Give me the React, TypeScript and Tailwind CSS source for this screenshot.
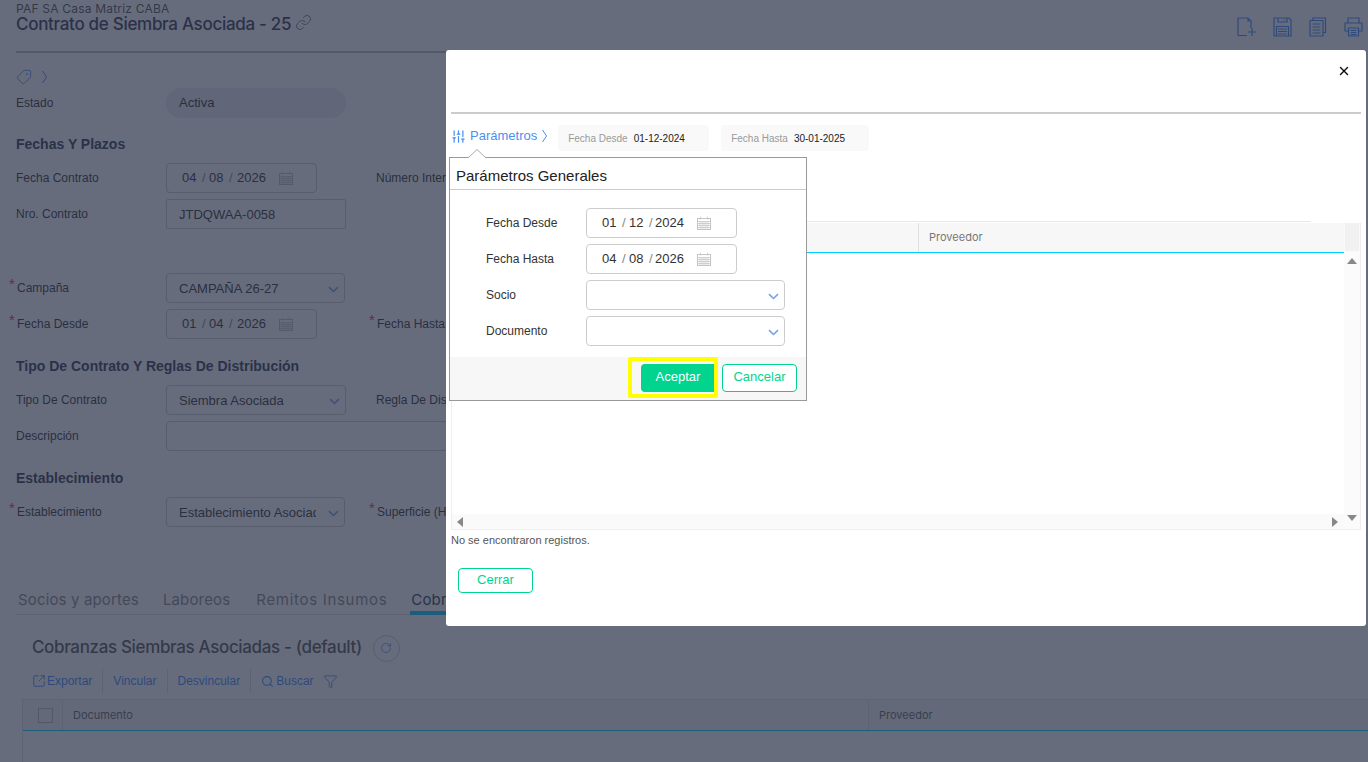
import React from 'react';
import { X, Link, Tag, SlidersVertical, Search, Filter, RotateCw, SquareArrowOutUpRight } from 'lucide-react';

const body = 'font-["Liberation_Sans",Arial,sans-serif]';
const display = 'font-["Inter",sans-serif]';

const CalendarIcon = () => (
  <svg width="14" height="14" viewBox="0 0 14 14" fill="none" stroke="#c4c4c4" strokeWidth="1" className="shrink-0">
    <rect x="0.5" y="2.5" width="13" height="11" />
    <path d="M3.500 0.500v3M10.500 0.500v3M1 5.500h12M1 7.500h12M1 9.500h12M1 11.500h12M3 5v8M5 5v8M7 5v8M9 5v8M11 5v8" strokeWidth="0.7" />
  </svg>
);

const Caret = () => (
  <svg width="11" height="7" viewBox="0 0 11 7" fill="none" stroke="#7ba0e6" strokeWidth="1.6" className="shrink-0 mt-[3px]">
    <path d="M1 1.200 L5.500 5.500 L10 1.200" />
  </svg>
);

// tall narrow chevron used next to the tag and the Parámetros link
const TallChevron = () => (
  <svg width="7" height="14" viewBox="0 0 7 14" fill="none" stroke="currentColor" strokeWidth="1" className="shrink-0">
    <path d="M1.500 1 L5.500 7 L1.500 13" />
  </svg>
);

const Req = () => <span className="text-[#ff2060] text-[15px] leading-none w-[8px] -ml-[7px] -mt-[9px]">*</span>;

const DateField = ({ d, m, y, tight }: { d: string; m: string; y: string; tight?: boolean }) => (
  <div className="h-[30px] w-[151px] border border-[#ccc] rounded-[4px] bg-white flex items-center pl-[15px] text-[13px] text-[#333]">
    <span className="w-[20px]">{d}</span>
    <span className="w-[7px] text-[#888]">/</span>
    <span className="w-[20px]">{m}</span>
    <span className={`${tight ? 'w-[6px]' : 'w-[8px]'} text-[#888]`}>/</span>
    <span className="w-[42px]">{y}</span>
    <CalendarIcon />
  </div>
);

const SelectBox = ({ value, w = 'w-[179px]' }: { value: string; w?: string }) => (
  <div className={`h-[30px] ${w} border border-[#ccc] rounded-[4px] bg-white flex items-center justify-between pl-[12px] pr-[5px] text-[13px] text-[#333]`}>
    <span className="w-[137px] overflow-hidden whitespace-nowrap pt-[2px]">{value}</span>
    <Caret />
  </div>
);

const Row = ({ label, req, second, secondReq, children, className = '' }: { label: string; req?: boolean; second?: string; secondReq?: boolean; children: React.ReactNode; className?: string }) => (
  <div className={`flex items-center h-[30px] ${className}`}>
    <div className="w-[150px] flex items-center text-[12px] text-[#333] shrink-0 -mt-px">
      {req && <Req />}
      <span>{label}</span>
    </div>
    <div className="w-[210px] shrink-0">{children}</div>
    {second && (
      <div className="flex items-center text-[12px] text-[#333] whitespace-nowrap -mt-px">
        {secondReq && <Req />}
        <span>{second}</span>
      </div>
    )}
  </div>
);

const Heading = ({ children, className = '' }: { children: React.ReactNode; className?: string }) => (
  <div className={`h-5 leading-5 text-[14px] font-bold text-[#333a55] ${className}`}>{children}</div>
);

const ToolbarIcons = () => (
  <div className="flex items-start gap-[17px] text-[#3d8bfd]">
    <svg width="19" height="20" viewBox="0 0 19 20" fill="none" stroke="currentColor" strokeWidth="1.2">
      <path d="M10 18.500H1V1h10l3 3v7" />
      <path d="M11 1v3h3M15 11v8M11 15h8" />
    </svg>
    <svg width="19" height="20" viewBox="0 0 19 20" fill="none" stroke="currentColor" strokeWidth="1.2">
      <path d="M1 1h15l2 2v16H1z" />
      <path d="M5 1v4h9V1M11 2.500v1M3.500 19V9.500h12V19M5 12h9M5 14.500h9M5 17h9" />
    </svg>
    <svg width="18" height="20" viewBox="0 0 18 20" fill="none" stroke="currentColor" strokeWidth="1.2">
      <path d="M4 3.500V1h12.500v14.500H14" />
      <path d="M1 3.500h13v15.500H1zM3.500 7h8M3.500 10h8M3.500 13h8M3.500 16h8" />
    </svg>
    <svg width="19" height="20" viewBox="0 0 19 20" fill="none" stroke="currentColor" strokeWidth="1.2">
      <path d="M4 6V1h11v5M4 14H1V6h17v8h-3" />
      <path d="M4.500 11h10v8h-10zM6.500 13.500h6M6.500 15.500h6M6.500 17.500h6" />
    </svg>
  </div>
);

const Background = () => (
  <div className={`${body} h-[762px] overflow-hidden bg-white`}>
    <div className="px-4">
      <div className="h-[51px]">
        <div className={`${display} text-[12px] leading-[14px] pt-[2px] text-[#555] tracking-[0.2px]`}>PAF SA Casa Matriz CABA</div>
        <div className="flex items-start justify-between -mt-[3px]">
          <div className="flex items-center gap-1">
            <span className={`${display} text-[17px] leading-[22px] font-medium text-[#333a55] tracking-[-0.3px]`}>Contrato de Siembra Asociada - 25</span>
            <Link size={17} strokeWidth={1} className="text-[#555] -mt-[3px]" />
          </div>
          <div className="-mr-[11px] mt-[4px]">
            <ToolbarIcons />
          </div>
        </div>
      </div>
      <div className="h-[2px] bg-[#bbb]" />
      <div className="mt-[16px] h-4 flex items-center gap-[9px] text-[#3d8bfd]">
        <Tag size={16} strokeWidth={1.3} className="rotate-90" />
        <TallChevron />
      </div>
      <Row label="Estado" className="mt-[3px]">
        <div className="w-[180px] h-[30px] rounded-full bg-[#e9ebf1] flex items-center pl-[13px] text-[13px] text-[#333]">Activa</div>
      </Row>
      <Heading className="mt-[16px]">Fechas Y Plazos</Heading>
      <Row label="Fecha Contrato" second="Número Interno" className="mt-[9px]">
        <DateField d="04" m="08" y="2026" />
      </Row>
      <Row label="Nro. Contrato" className="mt-[6px]">
        <div className="w-[180px] h-[30px] border border-[#ccc] rounded-[2px] bg-white flex items-center pl-[12px] pt-[2px] text-[13px] text-[#333]">JTDQWAA-0058</div>
      </Row>
      <Row label="Campaña" req className="mt-[44px]">
        <SelectBox value="CAMPAÑA 26-27" />
      </Row>
      <Row label="Fecha Desde" req second="Fecha Hasta" secondReq className="mt-[6px]">
        <DateField d="01" m="04" y="2026" />
      </Row>
      <Heading className="mt-[17px]">Tipo De Contrato Y Reglas De Distribución</Heading>
      <Row label="Tipo De Contrato" second="Regla De Distribución" className="mt-[9px]">
        <SelectBox value="Siembra Asociada" w="w-[180px]" />
      </Row>
      <div className="flex items-center h-[30px] mt-[6px]">
        <div className="w-[150px] text-[12px] text-[#333] shrink-0 -mt-px">Descripción</div>
        <div className="w-[500px] h-[30px] border border-[#ccc] rounded-[4px] bg-white" />
      </div>
      <Heading className="mt-[17px]">Establecimiento</Heading>
      <Row label="Establecimiento" req second="Superficie (Ha)" secondReq className="mt-[9px]">
        <SelectBox value="Establecimiento Asociado" />
      </Row>
      <div className={`${display} mt-[63px] h-[25px] border-b border-[#ddd] flex gap-[24px] pl-[2px] text-[15px] leading-5 text-[#888] whitespace-nowrap tracking-[0.15px]`}>
        <span>Socios y aportes</span>
        <span>Laboreos</span>
        <span className="tracking-[0.7px] ml-[2px]">Remitos Insumos</span>
        <span className="relative text-[#333a55] w-[60px]">
          Cobranzas
          <span className="absolute left-[-1px] right-0 top-[21px] h-[4px] bg-[#00ccff]" />
        </span>
      </div>
      <div className="mt-[20px] pl-4 h-[26px] flex items-center gap-[11px]">
        <span className={`${display} text-[17px] font-medium text-[#555] tracking-[-0.35px]`}>Cobranzas Siembras Asociadas - (default)</span>
        <span className="w-[27px] h-[27px] rounded-full border border-[#ccc] flex items-center justify-center text-[#3d8bfd]">
          <RotateCw size={12} strokeWidth={1.5} />
        </span>
      </div>
      <div className="mt-[8px] pl-4 h-6 flex items-center text-[12px] text-[#3d8bfd]">
        <div className="flex items-center pr-[10px] border-r border-[#ddd] h-6">
          <SquareArrowOutUpRight size={14} strokeWidth={1.6} className="mr-px" />
          Exportar
        </div>
        <div className="flex items-center px-[10px] border-r border-[#ddd] h-6">Vincular</div>
        <div className="flex items-center px-[10px] border-r border-[#ddd] h-6">Desvincular</div>
        <div className="flex items-center pl-[10px] h-6">
          <Search size={13} strokeWidth={2} className="mr-[2px]" />
          Buscar
        </div>
        <Filter size={15} strokeWidth={1.4} className="ml-[9px]" />
      </div>
      <div className="mt-[6px] ml-[6px] -mr-4 border-l border-[#e2e2e2] h-[70px]">
        <div className={`${display} h-[32px] bg-[#f5f5f5] border-y border-y-[#e5e5e5] border-b-[#00ccff] flex items-center text-[11px] text-[#666]`}>
          <div className="w-[40px] h-full border-r border-[#ddd] flex items-center pl-[15px]">
            <span className="w-[15px] h-[15px] border border-[#bbb] bg-[#f5f5f5]" />
          </div>
          <div className="w-[806px] h-full border-r border-[#ddd] flex items-center pl-[10px]">Documento</div>
          <div className="pl-[10px]">Proveedor</div>
        </div>
      </div>
    </div>
  </div>
);

const ParamRow = ({ label, children }: { label: string; children: React.ReactNode }) => (
  <div className="flex items-center h-[30px] text-[12px] text-[#333]">
    <div className="w-[100px]">{label}</div>
    {children}
  </div>
);

const Popover = () => (
  <div className="absolute left-[3px] top-[107px] w-[358px] h-[244px] bg-white border border-[#999] z-10 flex flex-col">
    <svg width="18" height="9" viewBox="0 0 18 9" className="absolute left-[18px] -top-[9px]">
      <path d="M0 9 L9 0.500 L18 9" fill="white" stroke="#aaa" strokeWidth="1" />
    </svg>
    <div className="h-[32px] border-b border-[#ccc] flex items-center pl-[6px] pt-[4px] text-[15px] leading-none text-[#222]">Parámetros Generales</div>
    <div className="flex-1 pl-[36px] pt-[18px] flex flex-col gap-[6px]">
      <ParamRow label="Fecha Desde"><DateField d="01" m="12" y="2024" tight /></ParamRow>
      <ParamRow label="Fecha Hasta"><DateField d="04" m="08" y="2026" tight /></ParamRow>
      <ParamRow label="Socio">
        <div className="w-[199px] h-[30px] border border-[#ccc] rounded-[4px] flex items-center justify-end pr-[5px]"><Caret /></div>
      </ParamRow>
      <ParamRow label="Documento">
        <div className="w-[199px] h-[30px] border border-[#ccc] rounded-[4px] flex items-center justify-end pr-[5px]"><Caret /></div>
      </ParamRow>
    </div>
    <div className="h-[43px] bg-[#f7f7f7] flex items-start justify-end pr-[9px] gap-[4px]">
      <div className="w-[90px] h-[41px] border-4 border-[#ffff00] rounded-[2px] flex items-center justify-end">
        <div className="w-[73px] h-[28px] rounded-l-[4px] bg-[#00d48f] text-white text-[13px] flex items-center justify-center pb-[2px] pl-px">Aceptar</div>
      </div>
      <div className="mt-[7px] w-[75px] h-[28px] rounded-[4px] bg-white border border-[#00d48f] text-[#00d48f] text-[13px] flex items-center justify-center pb-[2px]">Cancelar</div>
    </div>
  </div>
);

const Arrow = ({ dir }: { dir: 'up' | 'down' | 'left' | 'right' }) => {
  const d = { up: 'M0 7 L5 1 L10 7Z', down: 'M0 1 L10 1 L5 7Z', left: 'M8 0 L8 10 L2 5Z', right: 'M2 0 L2 10 L8 5Z' }[dir];
  return (
    <svg width="10" height="10" viewBox="0 0 10 10" fill="#888" className="shrink-0">
      <path d={d} />
    </svg>
  );
};

const Dialog = () => (
  <div className={`${body} absolute left-[446px] top-[50px] w-[920px] h-[576px] bg-white rounded-[3px] px-[5px] z-10`}>
    <div className="h-[62px] flex justify-end pt-[14px] pr-[10px]">
      <X size={14} strokeWidth={2.5} className="text-[#111]" />
    </div>
    <div className="h-[2px] bg-[#ccc]" />
    <div className="mt-[11px] h-[26px] flex items-center text-[#4a90f0]">
      <div className="flex items-center -mt-[4px]">
        <SlidersVertical size={15} strokeWidth={2} />
        <span className="text-[13px] ml-[4px]">Parámetros</span>
        <span className="ml-[4px]"><TallChevron /></span>
      </div>
      <div className="ml-[10px] w-[151px] h-[26px] bg-[#f9f9f9] rounded-[4px] flex items-center pl-[10px] gap-[6px] text-[10px]">
        <span className="text-[#999]">Fecha Desde</span>
        <span className="text-[#222]">01-12-2024</span>
      </div>
      <div className="ml-[12px] w-[148px] h-[26px] bg-[#f9f9f9] rounded-[4px] flex items-center pl-[10px] gap-[6px] text-[10px]">
        <span className="text-[#999]">Fecha Hasta</span>
        <span className="text-[#222]">30-01-2025</span>
      </div>
    </div>
    <Popover />
    <div className="mt-[70px] w-[860px] h-px bg-[#e8e8e8]" />
    <div className="mt-px h-[307px] border-x border-b border-[#eee] flex">
      <div className="flex-1 flex flex-col min-w-0">
        <div className={`${display} h-[30px] bg-[#f7f7f7] border-b border-[#00ccff] flex items-center text-[11px] text-[#777]`}>
          <div className="w-[467px] h-full border-r border-[#e0e0e0]" />
          <div className="pl-[10px]">Proveedor</div>
        </div>
        <div className="flex-1" />
        <div className="h-[15px] bg-[#fafafa] flex items-center justify-between pl-[3px] pr-[4px]">
          <Arrow dir="left" />
          <Arrow dir="right" />
        </div>
      </div>
      <div className="w-[16px] bg-[#fbfbfb] flex flex-col items-center">
        <div className="w-[14px] h-[28px] bg-[#f1f1f1] -ml-px shrink-0" />
        <div className="mt-[6px]"><Arrow dir="up" /></div>
        <div className="flex-1" />
        <div className="mb-[5px]"><Arrow dir="down" /></div>
      </div>
    </div>
    <div className="mt-[3px] text-[11px] leading-[14px] text-[#555]">No se encontraron registros.</div>
    <div className="mt-[21px] ml-[7px] w-[75px] h-[25px] border border-[#00d48f] rounded-[4px] text-[#00d48f] text-[13px] flex items-center justify-center pb-px">Cerrar</div>
  </div>
);

export default function App() {
  return (
    <div className="relative h-[762px] overflow-hidden">
      <Background />
      <div className="absolute inset-0 bg-[#262d45]/70" />
      <Dialog />
    </div>
  );
}
